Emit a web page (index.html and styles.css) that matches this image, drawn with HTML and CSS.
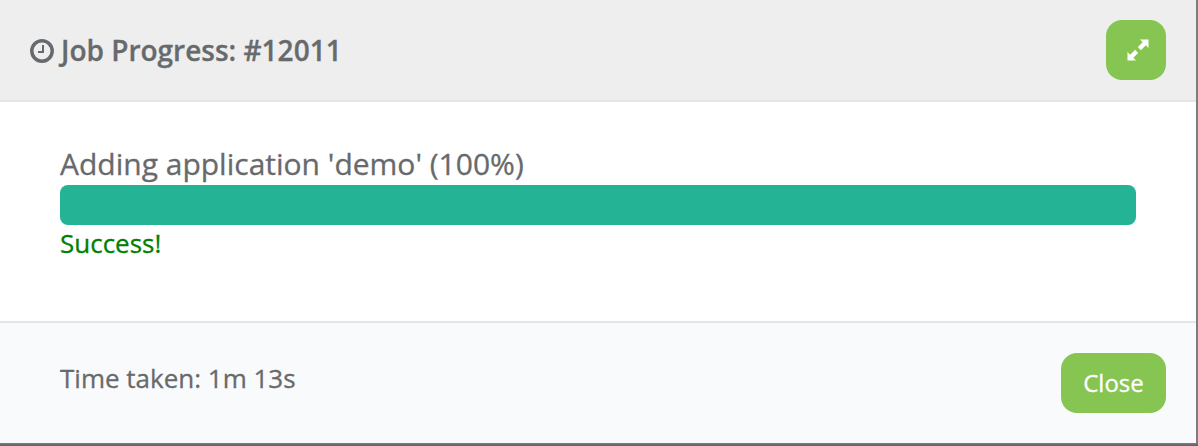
FILE: index.html
```html
<!DOCTYPE html>
<html lang="en">
<head>
<meta charset="utf-8">
<title>Job Progress</title>
<link rel="stylesheet" href="styles.css">
</head>
<body>
<div class="modal">
  <header class="modal-header">
    <h4 class="title">
      <svg class="clock" viewBox="0 0 24 24" aria-hidden="true"><circle cx="12" cy="12" r="10.2"/><path class="hands" d="M13 6v7H8"/></svg>
      <span class="title-text">Job Progress: #12011</span>
    </h4>
    <button class="btn btn-expand" aria-label="Expand">
      <svg class="expand" viewBox="0 0 22 22" aria-hidden="true"><path d="M13 .5h8.500v8.500l-2.700-2.700-4.900 4.900-3.100-3.100 4.900-4.900zM.5 13v8.500h8.500l-2.700-2.700 4.900-4.900-3.100-3.100-4.900 4.900z"/></svg>
    </button>
  </header>
  <main class="modal-body">
    <div class="task">Adding application 'demo' (100%)</div>
    <div class="progress"><div class="progress-bar" style="width:100%"></div></div>
    <div class="status">Success!</div>
  </main>
  <footer class="modal-footer">
    <div class="time">Time taken: 1m 13s</div>
    <button class="btn btn-close">Close</button>
  </footer>
</div>
</body>
</html>
```

FILE: styles.css
```css
* { box-sizing: border-box; }
body {
  margin: 0;
  height: 446px;
  overflow: hidden;
  background: linear-gradient(#7d7d7f 443px, #747476 444px, #5e5e60 446px);
  font-family: "Open Sans", sans-serif;
  font-size: 26px;
  color: #676a6c;
  -webkit-text-stroke: 0.3px;
}
.modal {
  display: flex;
  flex-direction: column;
  width: 1196px;
  height: 443px;
  background: #fff;
}
.modal-header {
  display: flex;
  justify-content: space-between;
  align-items: flex-start;
  height: 102px;
  padding: 20px 30px 0;
  background: #eee;
  border-bottom: 2px solid #e5e5e5;
}
.title {
  display: flex;
  align-items: center;
  gap: 7px;
  height: 62px;
  margin: 0;
  font-size: 28px;
  font-weight: 600;
}
.title-text { padding-bottom: 2px; }
.clock {
  width: 24px;
  height: 24px;
  fill: none;
  stroke: currentColor;
  stroke-width: 3.5;
}
.hands { stroke-width: 2; }
.btn {
  height: 60px;
  padding: 0;
  border: 0;
  border-radius: 16px;
  background: #87c552;
  color: #fff;
  font: inherit;
}
.btn-expand {
  display: flex;
  align-items: center;
  justify-content: center;
  width: 60px;
  padding: 0 0 1px 4px;
}
.expand {
  width: 22px;
  height: 22px;
  fill: currentColor;
}
.modal-body {
  height: 219px;
  padding: 43px 60px 0;
}
.task {
  height: 40px;
  font-size: 30px;
  line-height: 38px;
}
.progress {
  height: 40px;
  overflow: hidden;
  border-radius: 8px;
  background: #f5f5f5;
}
.progress-bar {
  height: 100%;
  background: #25b396;
}
.status {
  font-size: 26px;
  line-height: 37px;
  color: green;
}
.modal-footer {
  display: flex;
  justify-content: space-between;
  height: 122px;
  padding: 30px 30px 0 60px;
  background: #f9fafc;
  border-top: 2px solid #e5e5e5;
}
.time { line-height: 50px; }
.btn-close {
  width: 105px;
  padding-bottom: 2px;
  font-size: 24px;
}
```
